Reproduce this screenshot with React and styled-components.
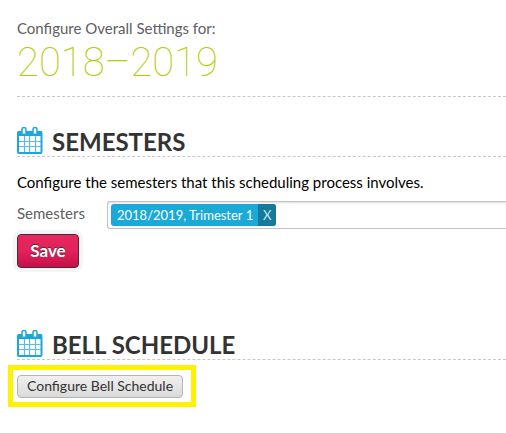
import React, {useState} from 'react'
import styled, {createGlobalStyle} from 'styled-components'

const GlobalStyle = createGlobalStyle`
  * {
    box-sizing: border-box;
  }

  body {
    margin: 0;
    background: #fff;
    color: #000;
    font-family: Lato, "Open Sans", sans-serif;
    font-size: 15px;
    line-height: 20px;
  }
`

const CalendarIcon = () => (
  <svg width="26" height="27" viewBox="0 0 26 27" aria-hidden="true">
    <rect x="1" y="5" width="23.5" height="21" rx="1" fill="#fff" stroke="#19a7dc" strokeWidth="2" />
    <path d="M1 4h23.5v5H1z" fill="#19a7dc" />
    <path d="M2 14.5h22M2 19.5h22M7.5 9v16M12.5 9v16M18.5 9v16" stroke="#5db8e4" strokeWidth="1.2" />
    <path d="M5 6.5V2.5a2 2 0 0 1 4 0V6.5M16 6.5V2.5a2 2 0 0 1 4 0V6.5" fill="#fff" stroke="#19a7dc" strokeWidth="1.5" />
  </svg>
)

const App = () => {
  const [semesters, setSemesters] = useState(['2018/2019, Trimester 1'])

  const removeSemester = (name) => {
    setSemesters(semesters.filter((item) => item !== name))
  }

  return (
    <>
      <GlobalStyle />
      <Page>
        <Header>
          <Intro>Configure Overall Settings for:</Intro>
          <Year>2018–2019</Year>
        </Header>

        <Section>
          <SectionHeader>
            <CalendarIcon />
            <SectionTitle>SEMESTERS</SectionTitle>
          </SectionHeader>
          <Description>Configure the semesters that this scheduling process involves.</Description>
          <Field>
            <Label htmlFor="semesters">Semesters</Label>
            <TokenBox>
              {semesters.map((name) => (
                <Token key={name}>
                  <TokenName>{name}</TokenName>
                  <RemoveButton type="button" aria-label={`Remove ${name}`} onClick={() => removeSemester(name)}>X</RemoveButton>
                </Token>
              ))}
              <TokenInput id="semesters" type="text" />
            </TokenBox>
          </Field>
          <SaveButton type="button">Save</SaveButton>
        </Section>

        <Section>
          <SectionHeader>
            <CalendarIcon />
            <SectionTitle>BELL SCHEDULE</SectionTitle>
          </SectionHeader>
          <Highlight>
            <PlainButton type="button">Configure Bell Schedule</PlainButton>
          </Highlight>
        </Section>
      </Page>
    </>
  )
}

const Page = styled.main`
  padding: 18px 0 24px 17px;
  overflow: hidden;
`

const Header = styled.header`
  padding-bottom: 8px;
  margin-bottom: 30px;
  border-bottom: 1px dashed #c8c8c8;
`

const Intro = styled.p`
  margin: 0;
  color: #606060;
`

const Year = styled.h1`
  margin: 0;
  color: #b4cc04;
  font-family: Roboto, Lato, sans-serif;
  font-size: 40px;
  font-weight: 100;
  line-height: 50px;
`

const Section = styled.section`
  margin-bottom: 62px;

  &:last-child {
    margin-bottom: 0;
  }
`

const SectionHeader = styled.div`
  display: flex;
  align-items: flex-start;
  gap: 9px;
  height: 30px;
  border-bottom: 1px dashed #c8c8c8;
`

const SectionTitle = styled.h2`
  margin: 0;
  color: #333;
  font-size: 24px;
  font-weight: 700;
  line-height: 30px;
`

const Description = styled.p`
  margin: 15px 0 9px;
`

const Field = styled.div`
  display: flex;
  margin-bottom: 5px;
`

const Label = styled.label`
  flex: 0 0 90px;
  padding-top: 2px;
  color: #606060;
`

const TokenBox = styled.div`
  display: flex;
  flex: 1;
  height: 28px;
  padding: 2px 3px;
  border: 1px solid #c2c2c2;
  border-right: 0;
  border-radius: 3px 0 0 3px;
  box-shadow: inset 0 2px 3px -1px #ddd;
`

const Token = styled.span`
  display: flex;
  height: 22px;
  overflow: hidden;
  border-radius: 3px;
  background: #1ba9d8;
  color: #fff;
  font-size: 13px;
  line-height: 22px;
`

const TokenName = styled.span`
  padding: 0 5px 0 6px;
  white-space: nowrap;
`

const RemoveButton = styled.button`
  width: 18px;
  padding: 0;
  border: 0;
  background: #157a9c;
  color: #cfe6ef;
  font: inherit;
  cursor: pointer;
`

const TokenInput = styled.input`
  flex: 1;
  min-width: 0;
  border: 0;
  outline: none;
  background: transparent;
  font: inherit;
`

const SaveButton = styled.button`
  display: block;
  width: 62px;
  height: 34px;
  padding: 0;
  border: 1px solid #4a2a38;
  border-radius: 4px;
  box-shadow: 0 0 0 4px #f5f5f5;
  background: linear-gradient(#e6265f, #e2225b 50%, #c60f49);
  color: #fff;
  font: inherit;
  font-size: 17px;
  font-weight: 700;
  text-shadow: 0 -1px 1px #333;
  cursor: pointer;
`

const Highlight = styled.div`
  display: inline-flex;
  margin: 5px 0 0 -9px;
  padding: 5px 8px 4px 4px;
  border: 5px solid #fff200;
`

const PlainButton = styled.button`
  height: 23px;
  padding: 0 9px 2px;
  border: 1px solid #b4b4b4;
  border-radius: 4px;
  background: linear-gradient(#f0f0f0, #dadada);
  color: #333;
  font: inherit;
  font-size: 14px;
  line-height: 20px;
  cursor: pointer;
`

export default App
